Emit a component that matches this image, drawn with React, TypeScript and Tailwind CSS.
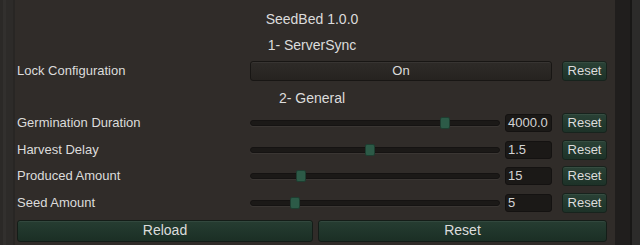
import React from "react";

const font = { fontFamily: '"Liberation Sans", Arial, sans-serif' };

function ResetBtn() {
  return (
    <div className="w-[45px] h-[20px] shrink-0 flex items-center justify-center rounded-[3px] border border-[#17231d] bg-gradient-to-b from-[#2a4236] to-[#1d3228] text-[13px] text-[#dcdcdc] shadow-[inset_0_1px_0_rgba(255,255,255,0.06)]">
      Reset
    </div>
  );
}

function SliderRow({ label, pos, value }: { label: string; pos: number; value: string }) {
  return (
    <div className="flex items-center h-[20px]">
      <div className="w-[233px] shrink-0 text-[13px] text-[#dcdcdc]">{label}</div>
      <div className="relative w-[250px] h-[20px] shrink-0 flex items-center">
        <div className="w-full h-[6px] rounded-full bg-[#1b1917] border border-[#151312] shadow-[0_1px_0_rgba(255,255,255,0.05)]" />
        <div
          className="absolute top-[4px] w-[10px] h-[12px] rounded-[2px] bg-[#2c5a47] border border-[#1e3d30]"
          style={{ left: `${pos - 5}px` }}
        />
      </div>
      <div className="ml-[5px] w-[47px] h-[18px] shrink-0 rounded-[3px] bg-[#1b1917] border border-[#141211] flex items-center pl-[2px] text-[13px] text-[#d4d4d4]">
        {value}
      </div>
      <div className="ml-[10px]">
        <ResetBtn />
      </div>
    </div>
  );
}

export default function App() {
  return (
    <div className="w-[640px] h-[245px] flex bg-[#302c29] overflow-hidden" style={font}>
      <div className="w-[15px] h-full shrink-0 flex">
        <div className="w-[3px] bg-[#2b2927]" />
        <div className="w-[3px] bg-[#32302e]" />
        <div className="w-[7px] bg-[#2d2b29]" />
        <div className="w-[2px] bg-[#282624]" />
      </div>
      <div className="w-[600px] h-full shrink-0 flex flex-col pl-[2px] pr-[8px]">
        <div className="mt-[9px] h-[20px] flex items-center justify-center text-[14px] text-[#dcdcdc]">
          SeedBed 1.0.0
        </div>
        <div className="mt-[6px] h-[20px] flex items-center justify-center text-[14px] text-[#dcdcdc]">
          1- ServerSync
        </div>
        <div className="mt-[6px] h-[20px] flex items-center">
          <div className="w-[233px] shrink-0 text-[13px] text-[#dcdcdc]">Lock Configuration</div>
          <div className="w-[302px] h-[20px] shrink-0 rounded-[3px] border border-[#181614] bg-gradient-to-b from-[#2e2b28] to-[#262320] flex items-center justify-center text-[13px] text-[#dcdcdc] shadow-[inset_0_1px_0_rgba(255,255,255,0.05)]">
            On
          </div>
          <div className="ml-[10px]">
            <ResetBtn />
          </div>
        </div>
        <div className="mt-[7px] h-[20px] flex items-center justify-center text-[14px] text-[#dcdcdc]">
          2- General
        </div>
        <div className="mt-[5px] flex flex-col gap-[6.5px]">
          <SliderRow label="Germination Duration" pos={195} value="4000.0" />
          <SliderRow label="Harvest Delay" pos={120} value="1.5" />
          <SliderRow label="Produced Amount" pos={51} value="15" />
          <SliderRow label="Seed Amount" pos={45} value="5" />
        </div>
        <div className="mt-[7px] flex gap-[5px]">
          <div className="w-[296px] h-[22px] rounded-[3px] border border-[#141d18] bg-gradient-to-b from-[#263d32] to-[#1b2f25] flex items-center justify-center text-[14px] text-[#dcdcdc] shadow-[inset_0_1px_0_rgba(255,255,255,0.06)]">
            Reload
          </div>
          <div className="w-[289px] h-[22px] rounded-[3px] border border-[#141d18] bg-gradient-to-b from-[#263d32] to-[#1b2f25] flex items-center justify-center text-[14px] text-[#dcdcdc] shadow-[inset_0_1px_0_rgba(255,255,255,0.06)]">
            Reset
          </div>
        </div>
      </div>
      <div className="w-[15px] h-full shrink-0 bg-[#201e1d]" />
      <div className="w-[2px] h-full shrink-0 bg-[#181716]" />
      <div className="flex-1 h-full bg-[#2c2b2a]" />
    </div>
  );
}
